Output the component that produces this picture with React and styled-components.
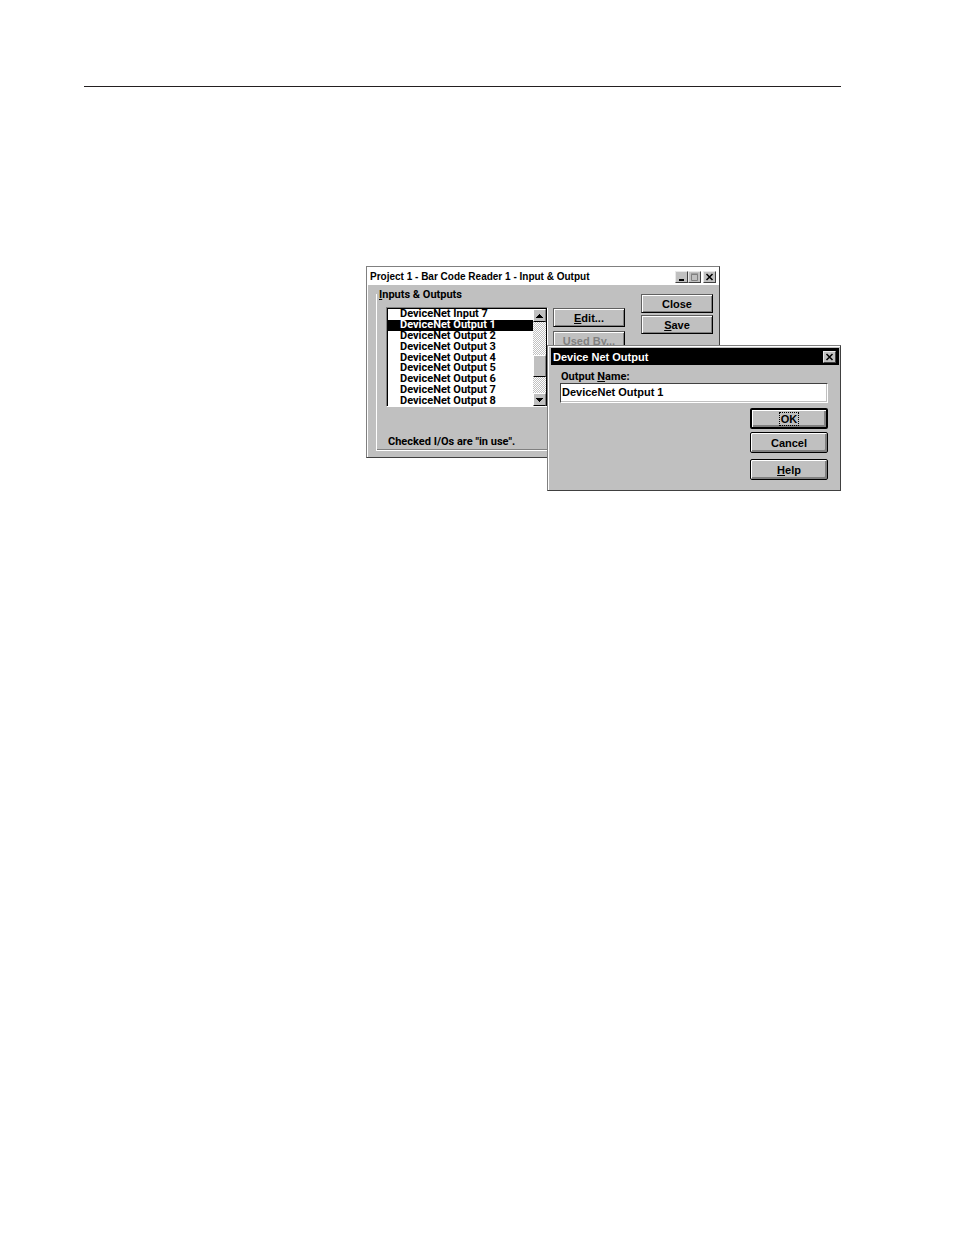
import styled, { createGlobalStyle, css } from "styled-components"

const GlobalStyle = createGlobalStyle`
* {
  box-sizing: border-box;
}
body {
  margin: 0;
  background: white;
  color: black;
  font: 700 11px/12px "Liberation Sans", Arial, sans-serif;
}
`

const narrow = css`
font-family: Roboto, sans-serif;
`

const Page = styled.main`
padding: 86px 113px 60px 84px;
`
const Rule = styled.hr`
height: 1px;
margin: 0;
border: none;
background: #231f20;
`
const Desktop = styled.section`
position: relative;
width: 475px;
height: 225px;
margin: 179px 0 0 auto;
`
const Window = styled.section`
position: absolute;
background: #c0c0c0;
border: 1px solid #404040;
border-top-color: #808080;
border-left-color: #808080;
`
const MainWindow = styled(Window)`
top: 0;
left: 0;
width: 354px;
padding: 1px 0 0 1px;
box-shadow: inset 1px 1px white;
`
const DialogWindow = styled(Window)`
right: 0;
bottom: 0;
width: 294px;
padding: 2px 1px 0 3px;
box-shadow: inset 1px 1px white;
`
const TitleBar = styled.header`
display: flex;
align-items: center;
height: 17px;
padding: 0 3px 0 2px;
background: ${(p) => (p.$active ? "black" : "white")};
color: ${(p) => (p.$active ? "white" : "black")};
`
const Title = styled.h1`
flex: 1;
margin: 0;
font-size: ${(p) => (p.$small ? "10px" : "11px")};
line-height: 12px;
white-space: nowrap;
`
const TitleButton = styled.button`
display: grid;
place-items: center;
width: 13px;
height: 12px;
padding: 0;
margin-left: ${(p) => (p.$gap ? "2px" : "0")};
border: 1px solid;
border-color: #e8e8e8 #404040 #404040 #e8e8e8;
background: #c0c0c0;
color: ${(p) => (p.disabled ? "#808080" : "black")};
`
const Body = styled.div`
display: flex;
gap: 8px;
padding: 3px 6px 6px 8px;
`
const Group = styled.fieldset`
width: 257px;
min-width: 0;
margin: 0;
padding: 0;
border: 0 solid white;
border-left-width: 1px;
border-bottom-width: 1px;
box-shadow: inset 0 -1px #808080;
`
const Legend = styled.legend`
height: 12px;
padding: 0 2px;
line-height: 13px;
${narrow}
`
const GroupRow = styled.div`
display: flex;
gap: 5px;
padding: 7px 8px 0 9px;
`
const ListBox = styled.div`
display: flex;
width: 162px;
height: 100px;
padding: 1px 0 0 1px;
border: 1px solid white;
border-top-color: #808080;
border-left-color: #808080;
box-shadow: inset 1px 1px black;
background: white;
`
const List = styled.ul`
display: flex;
flex: 1;
flex-direction: column;
margin: 0;
padding: 0;
list-style: none;
`
const Item = styled.li`
display: flex;
flex: 1;
align-items: center;
padding-left: 12px;
line-height: 10px;
background: ${(p) => (p["aria-selected"] ? "black" : "white")};
color: ${(p) => (p["aria-selected"] ? "white" : "black")};
${narrow}
`
const ScrollBar = styled.div`
display: flex;
flex-direction: column;
width: 14px;
border-right: 1px solid black;
background: repeating-conic-gradient(#c0c0c0 0 25%, white 0 50%) 0 0 / 2px 2px;
`
const ScrollButton = styled.button`
display: grid;
place-items: center;
height: 13px;
padding: 0;
border: 1px solid;
border-color: white #808080 black white;
background: #c0c0c0;
`
const Track = styled.div`
display: flex;
flex: 1;
flex-direction: column;
justify-content: flex-end;
padding-bottom: 16px;
`
const Thumb = styled.div`
height: 22px;
border: 1px solid;
border-color: white #808080 black white;
background: #c0c0c0;
`
const Note = styled.p`
margin: 29px 0 2px 11px;
${narrow}
`
const Stack = styled.div`
display: flex;
flex-direction: column;
gap: ${(p) => p.$gap}px;
padding-top: ${(p) => p.$top}px;
`
const Button = styled.button`
width: 72px;
height: 19px;
padding: 0;
border: 1px solid;
border-color: #606060 black black #606060;
box-shadow: inset 1px 1px white, inset -1px -1px #808080;
background: #c0c0c0;
color: ${(p) => (p.disabled ? "#808080" : "black")};
font: inherit;
`
const DialogButton = styled(Button)`
width: 78px;
height: 21px;
border: ${(p) => (p.$default ? "2px" : "1px")} solid black;
border-radius: 2px;
box-shadow: inset 1px 1px white, inset -2px -2px #808080;
`
const Focus = styled.span`
padding: 0 1px;
outline: 1px dotted black;
`
const DialogBody = styled.form`
display: flex;
flex-direction: column;
padding: 6px 11px 10px 9px;
`
const Label = styled.label`
padding-left: 1px;
${narrow}
`
const TextBox = styled.input`
height: 20px;
margin: 0 0 5px;
padding: 0 0 2px 1px;
border: 1px solid white;
border-top-color: #404040;
border-left-color: #404040;
border-radius: 0;
box-shadow: inset -1px -1px #c0c0c0;
outline: none;
background: white;
font: inherit;
`
const Actions = styled.div`
display: grid;
justify-content: end;
row-gap: 3px;
`
const HelpRow = styled.div`
padding-top: 3px;
`

const items = [
    "DeviceNet Input 7",
    "DeviceNet Output 1",
    "DeviceNet Output 2",
    "DeviceNet Output 3",
    "DeviceNet Output 4",
    "DeviceNet Output 5",
    "DeviceNet Output 6",
    "DeviceNet Output 7",
    "DeviceNet Output 8",
]

const CloseIcon = () => (
    <svg width="9" height="8" viewBox="0 0 9 8" aria-hidden="true">
        <path d="M1.5 1L7.5 7M7.5 1L1.5 7" stroke="currentColor" strokeWidth="1.5" />
    </svg>
)

const Arrow = ({ down }) => (
    <svg width="7" height="4" viewBox="0 0 7 4" aria-hidden="true" shapeRendering="crispEdges">
        <path d={down ? "M0 0H7L3.5 4Z" : "M0 4H7L3.5 0Z"} />
    </svg>
)

const IoWindow = () => (
    <MainWindow>
        <TitleBar>
            <Title $small>Project 1 - Bar Code Reader 1 - Input &amp; Output</Title>
            <TitleButton aria-label="Minimize">
                <svg width="9" height="8" aria-hidden="true">
                    <path d="M2 6H7V8H2Z" />
                </svg>
            </TitleButton>
            <TitleButton aria-label="Maximize" disabled>
                <svg width="9" height="8" aria-hidden="true">
                    <path d="M1.5 1.5H7.5V7.5H1.5ZM1 1H8" fill="none" stroke="currentColor" />
                </svg>
            </TitleButton>
            <TitleButton aria-label="Close window" $gap>
                <CloseIcon />
            </TitleButton>
        </TitleBar>
        <Body>
            <Group>
                <Legend><u>I</u>nputs &amp; Outputs</Legend>
                <GroupRow>
                    <ListBox>
                        <List role="listbox" aria-label="Inputs & Outputs">
                            {items.map((item) => (
                                <Item key={item} role="option" aria-selected={item === "DeviceNet Output 1"}>
                                    {item}
                                </Item>
                            ))}
                        </List>
                        <ScrollBar>
                            <ScrollButton aria-label="Scroll up"><Arrow /></ScrollButton>
                            <Track><Thumb /></Track>
                            <ScrollButton aria-label="Scroll down"><Arrow down /></ScrollButton>
                        </ScrollBar>
                    </ListBox>
                    <Stack $gap={4} $top={1}>
                        <Button><u>E</u>dit...</Button>
                        <Button disabled>Used By...</Button>
                    </Stack>
                </GroupRow>
                <Note>Checked I/Os are "in use".</Note>
            </Group>
            <Stack $gap={2} $top={6}>
                <Button>Close</Button>
                <Button><u>S</u>ave</Button>
            </Stack>
        </Body>
    </MainWindow>
)

const OutputDialog = () => (
    <DialogWindow role="dialog" aria-label="Device Net Output">
        <TitleBar $active>
            <Title>Device Net Output</Title>
            <TitleButton aria-label="Close dialog">
                <CloseIcon />
            </TitleButton>
        </TitleBar>
        <DialogBody onSubmit={(e) => e.preventDefault()}>
            <Label htmlFor="output-name">Output <u>N</u>ame:</Label>
            <TextBox id="output-name" defaultValue="DeviceNet Output 1" />
            <Actions>
                <DialogButton $default><Focus>OK</Focus></DialogButton>
                <DialogButton type="button">Cancel</DialogButton>
                <HelpRow>
                    <DialogButton type="button"><u>H</u>elp</DialogButton>
                </HelpRow>
            </Actions>
        </DialogBody>
    </DialogWindow>
)

const App = () => {
    return (
        <Page>
            <GlobalStyle />
            <Rule />
            <Desktop>
                <IoWindow />
                <OutputDialog />
            </Desktop>
        </Page>
    )
}

export default App
